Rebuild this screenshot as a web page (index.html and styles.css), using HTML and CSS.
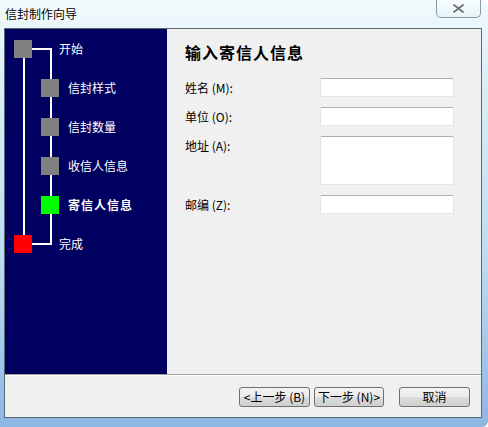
FILE: index.html
```html
<!DOCTYPE html>
<html lang="zh-CN">
<head>
  <meta charset="UTF-8" />
  <title>信封制作向导</title>
  <link rel="stylesheet" href="styles.css">
</head>
<body>
  <div class="window">
    <div class="titlebar">
      <span class="title">信封制作向导</span>
      <button class="close-btn" aria-label="关闭">
        <svg width="15" height="11" viewBox="0 0 15 11">
          <path d="M3 2 L12 9 M12 2 L3 9" stroke="#fff" stroke-width="4" stroke-linecap="round"/>
          <path d="M3 2 L12 9 M12 2 L3 9" stroke="#6b737c" stroke-width="2" stroke-linecap="round"/>
        </svg>
      </button>
    </div>

    <div class="client">
      <div class="main">
        <div class="sidebar">
          <svg class="tree-lines" width="162" height="345">
            <rect x="45" y="19" width="2" height="197" fill="#fff"/>
            <rect x="27" y="19" width="20" height="2" fill="#fff"/>
            <rect x="27" y="214" width="20" height="2" fill="#fff"/>
            <rect x="18" y="28" width="2" height="178" fill="#fff"/>
          </svg>
          <div class="step end"><span class="box"></span><span class="label">开始</span></div>
          <div class="step"><span class="box"></span><span class="label">信封样式</span></div>
          <div class="step"><span class="box"></span><span class="label">信封数量</span></div>
          <div class="step"><span class="box"></span><span class="label">收信人信息</span></div>
          <div class="step current"><span class="box"></span><span class="label">寄信人信息</span></div>
          <div class="step end last"><span class="box"></span><span class="label">完成</span></div>
        </div>

        <div class="content">
          <h1>输入寄信人信息</h1>
          <div class="form">
            <label for="name">姓名 (M):</label>
            <input id="name" type="text">
            <label for="unit">单位 (O):</label>
            <input id="unit" type="text">
            <label for="addr">地址 (A):</label>
            <textarea id="addr"></textarea>
            <label for="zip">邮编 (Z):</label>
            <input id="zip" type="text">
          </div>
        </div>
      </div>

      <div class="separator"></div>

      <div class="footer">
        <button class="btn">&lt;上一步 (B)</button>
        <button class="btn next">下一步 (N)&gt;</button>
        <button class="btn cancel">取消</button>
      </div>
    </div>
  </div>
</body>
</html>
```

FILE: styles.css
```css
body {
  margin: 0;
  width: 488px;
  height: 427px;
  overflow: hidden;
  background: #ffffff;
  font-family: "Noto Sans CJK SC", "DejaVu Sans", sans-serif;
  font-size: 12px;
}
.window {
  width: 488px;
  height: 427px;
  display: flex;
  flex-direction: column;
  background: linear-gradient(to bottom, #f2fafc 0%, #dcf1f8 15%, #bcdcf2 60%, #8db6e3 100%);
  border-radius: 0 8px 6px 0;
  box-sizing: border-box;
}
.titlebar {
  height: 28px;
  display: flex;
  justify-content: space-between;
  align-items: flex-start;
  padding-left: 5px;
  padding-right: 7px;
}
.title {
  line-height: 28px;
  color: #000;
  font-size: 12px;
  text-shadow: 0 0 6px #fff, 0 0 3px #fff;
}
.close-btn {
  width: 45px;
  height: 18px;
  padding: 0;
  border: 1px solid #8797a6;
  border-top: none;
  border-radius: 0 0 5px 5px;
  background: linear-gradient(to bottom, rgba(255,255,255,0.4), rgba(225,242,248,0.6));
  display: flex;
  align-items: center;
  justify-content: center;
}
.client {
  margin: 0 6px 0 4px;
  height: 390px;
  border: 1px solid #5a6775;
  box-sizing: border-box;
  background: #f0f0f0;
  display: flex;
  flex-direction: column;
}
.main {
  display: flex;
  height: 345px;
}
.sidebar {
  position: relative;
  width: 162px;
  background: #000060;
  color: #fff;
}
.tree-lines {
  position: absolute;
  left: 0;
  top: 0;
}
.step {
  position: relative;
  display: flex;
  align-items: center;
  height: 39px;
}
.step .box {
  width: 18px;
  height: 18px;
  margin-left: 36px;
  background: #808080;
}
.step .label {
  margin-left: 9px;
  line-height: 14px;
}
.step.end .box {
  margin-left: 9px;
}
.step.end .label {
  margin-left: 27px;
}
.step.current .box {
  background: #00ff00;
}
.step.current .label {
  font-weight: bold;
  letter-spacing: 1px;
}
.step.last .box {
  background: #ff0000;
}
.content {
  flex: 1;
  padding: 13px 0 0 18px;
  background: #f0f0f0;
}
.content h1 {
  margin: 0 0 16px 0;
  font-size: 16px;
  line-height: 20px;
  font-weight: bold;
  letter-spacing: 1px;
  color: #000;
}
.form {
  display: grid;
  grid-template-columns: 135px 134px;
  grid-template-rows: 19px 19px 49px 19px;
  row-gap: 10px;
}
.form label {
  line-height: 19px;
  color: #000;
}
.form input,
.form textarea {
  margin: 0;
  padding: 0;
  box-sizing: border-box;
  width: 134px;
  height: 100%;
  background: #fff;
  border: 1px solid #e2e3ea;
  border-top-color: #abadb3;
  border-radius: 2px;
  resize: none;
  font: inherit;
}
.separator {
  border-top: 1px solid #a0a0a0;
  border-bottom: 1px solid #fff;
}
.footer {
  flex: 1;
  display: flex;
  justify-content: flex-end;
  align-items: flex-start;
  padding: 11px 11px 0 0;
}
.btn {
  width: 71px;
  height: 20px;
  padding: 0;
  border: 1px solid #707070;
  border-radius: 3px;
  background: linear-gradient(to bottom, #f2f2f2 0%, #ebebeb 50%, #dddddd 51%, #cfcfcf 100%);
  font-family: inherit;
  font-size: 12px;
  line-height: 18px;
  color: #000;
  white-space: nowrap;
}
.btn.next {
  width: 70px;
  margin-left: 4px;
}
.btn.cancel {
  margin-left: 15px;
}
```
